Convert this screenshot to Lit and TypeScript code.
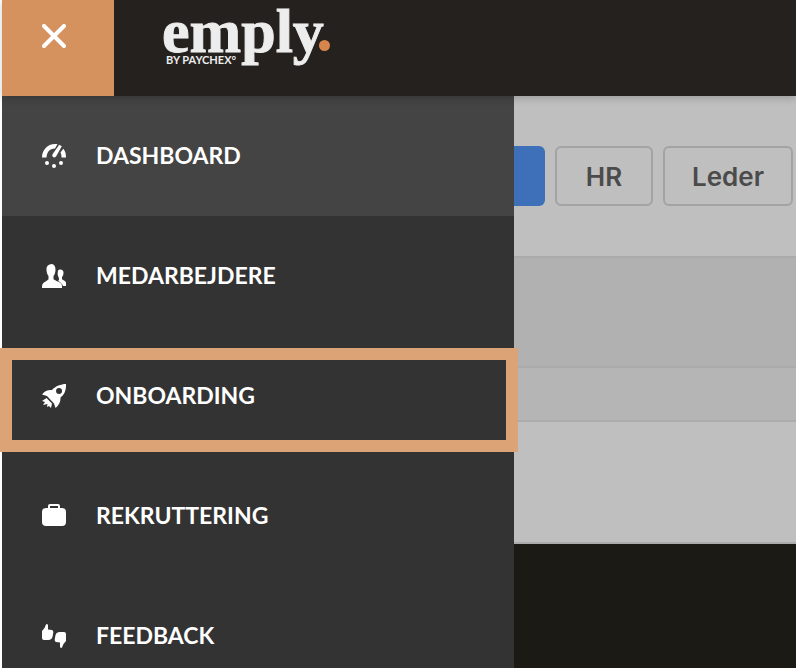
import { LitElement, html, css, svg } from "lit";
import { customElement } from "lit/decorators.js";

const icons = {
  gauge: svg`<path d="M0 13.500C0 6 5.500 0 13 0h2.500L13 4.600C8 4.400 4.500 8.500 4.600 13.500z"/><path d="m17.200.8 2.600 1.400L14 12.500q-1.500 1.500-3 .5t-.3-3z"/><path d="M21.300 4.800C23.500 7.300 24 10 24 13.500h-4.500c0-2-.2-3.500-1-5z"/><circle cx="5" cy="19" r="2"/><circle cx="12" cy="22" r="2"/><circle cx="19" cy="19" r="2"/>`,
  people: svg`<path d="M9 0c3 0 4.500 2 4.500 5.500 0 3-1 5.500-2 6.500v3c0 1 5.500 2.500 7.500 4.500 1 1 1 2.500 1 4.500H0c0-2 0-3.500 1-4.500 2-2 5.500-3.500 5.500-4.500v-3c-1-1-2-3.500-2-6.500C4.500 2 6 1 9 0z"/><path d="M16 6.500c.8-1.500 5.500-2 5.500 2 0 2-.6 3.500-1.500 4.500v2c0 1 4 1.500 4 4V22h-3c-1-2.500-3-4-5-5 1.500-1 1-2.500.5-4-1-1.500-1-4-.5-6.500z"/>`,
  rocket: svg`<path fill-rule="evenodd" d="M24 0c.3 5-1 10-5.500 13.500.3 4-1.500 8-5 10.500L12 19.500 5 12 0 10.500C2.500 7 6 5.700 10 6 13.500 2 19 .1 24 0zM17 4a3 3 0 1 0 .1 6 3 3 0 0 0-.1-6z"/><path d="m4.500 14 5.500 5.500-1 4.500-2-2-2 1 .5-3L1 21l2-3-3-1z"/>`,
  briefcase: svg`<path fill-rule="evenodd" d="M6 4V2q0-2 2-2h8q2 0 2 2v2h2q4 0 4 4v10q0 4-4 4H4q-4 0-4-4V8q0-4 4-4zm2 0h8V2H8z"/>`,
  thumbs: svg`<path d="M0 7 2.500 4 4 .5Q5-.5 6 1v4.500l4 .5q1.500.6 1.300 2.500L10.500 13Q10 15.500 7 16H2q-2 0-2-2z"/><path d="m24 17-2.500 3-1.500 3.500q-1 1-2-.5v-4.500l-4-.5q-1.500-.6-1.300-2.500L13.500 11Q14 8.500 17 8h5q2 0 2 2z"/>`,
};

const entries = [
  { label: "DASHBOARD", icon: icons.gauge, state: "active" },
  { label: "MEDARBEJDERE", icon: icons.people, state: "" },
  { label: "ONBOARDING", icon: icons.rocket, state: "marked" },
  { label: "REKRUTTERING", icon: icons.briefcase, state: "" },
  { label: "FEEDBACK", icon: icons.thumbs, state: "" },
];

@customElement("app-root")
export class AppRoot extends LitElement {
  static styles = css`
    :host {
      display: flex;
      flex-direction: column;
      height: 100vh;
      overflow: hidden;
      padding-left: 2px;
      box-sizing: border-box;
      position: relative;
      background: #fff;
      font-family: Lato, "Open Sans", sans-serif;
    }
    * { box-sizing: border-box; }
    .topbar {
      flex: none;
      display: flex;
      height: 96px;
      background: #25211e;
      box-shadow: 0 2px 8px rgba(0, 0, 0, 0.2);
      position: relative;
      z-index: 1;
    }
    .close {
      width: 112px;
      border: 0;
      padding: 0 8px 24px 0;
      background: #d6925e;
      color: #fff;
    }
    .close svg { width: 24px; height: 24px; display: block; margin: auto; }
    .logo {
      margin-left: 48px;
      color: #ededed;
      text-decoration: none;
      display: flex;
      flex-direction: column;
    }
    .word {
      display: flex;
      align-items: flex-end;
      height: 51px;
      font: bold 62px/60px "Liberation Serif", serif;
      -webkit-text-stroke: 1px #ededed;
    }
    .name { margin-bottom: -10px; }
    .dot {
      width: 11px;
      height: 11px;
      border-radius: 50%;
      background: #d6854c;
      margin-left: -5px;
    }
    .byline {
      margin: 2px 0 0 4px;
      font-size: 11px;
      line-height: 14px;
      font-weight: 700;
    }
    .body { flex: 1; display: flex; min-height: 0; }
    nav { flex: 0 0 512px; background: #333; position: relative; }
    ul { list-style: none; margin: 0; padding: 0; }
    li { position: relative; }
    .entry {
      display: flex;
      align-items: center;
      gap: 30px;
      height: 120px;
      padding-left: 40px;
      color: #fff;
      font-size: 23px;
      font-weight: 700;
      line-height: 28px;
      text-decoration: none;
    }
    .entry svg { width: 24px; height: 24px; fill: currentColor; }
    .label { padding-bottom: 2px; }
    .active { background: #444; }
    .marked::after {
      content: "";
      position: absolute;
      z-index: 2;
      inset: 12px -4px 4px -2px;
      border: 12px solid #dca377;
      pointer-events: none;
    }
    main {
      flex: 1;
      min-width: 0;
      display: flex;
      flex-direction: column;
      background: #1b1a15;
    }
    .tabs {
      display: flex;
      gap: 10px;
      height: 162px;
      padding-top: 50px;
      background: #bfbfbf;
      border-bottom: 2px solid #ababab;
    }
    .tab {
      flex: none;
      height: 60px;
      min-width: 98px;
      padding: 2px 27px 0;
      border: 2px solid #a3a3a3;
      border-radius: 6px;
      background: transparent;
      color: #4b4b4b;
      font: 600 26px/32px Inter, sans-serif;
    }
    .selected {
      min-width: 31px;
      padding: 0;
      border: 0;
      border-radius: 0 6px 6px 0;
      background: #3d70b8;
    }
    .band { height: 110px; background: #b1b1b1; border-bottom: 2px solid #ababab; }
    .strip { height: 54px; background: #b5b5b5; border-bottom: 2px solid #ababab; }
    .content { height: 122px; background: #bfbfbf; border-bottom: 2px solid #ababab; }
  `;

  render() {
    return html`
      <header class="topbar">
        <button class="close" aria-label="Luk menu">
          <svg viewBox="0 0 24 24" fill="none" stroke="currentColor" stroke-width="4" stroke-linecap="round"><path d="m2 2 20 20M22 2 2 22" /></svg>
        </button>
        <a class="logo" href="#">
          <span class="word"><span class="name">emply</span><span class="dot"></span></span>
          <span class="byline">BY PAYCHEX°</span>
        </a>
      </header>
      <div class="body">
        <nav>
          <ul>
            ${entries.map(
              (e) => html`<li class=${e.state}>
                <a class="entry" href="#"><svg viewBox="0 0 24 24" aria-hidden="true">${e.icon}</svg><span class="label">${e.label}</span></a>
              </li>`
            )}
          </ul>
        </nav>
        <main>
          <div class="tabs">
            <button class="tab selected" aria-label="Medarbejder"></button>
            <button class="tab">HR</button>
            <button class="tab">Leder</button>
          </div>
          <div class="band"></div>
          <div class="strip"></div>
          <div class="content"></div>
        </main>
      </div>
    `;
  }
}
